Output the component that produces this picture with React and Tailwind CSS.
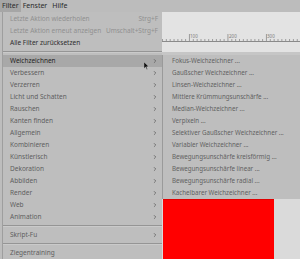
import { ChevronRight } from "lucide-react"

const mainItems = [
  { label: "Letzte Aktion wiederholen", shortcut: "Strg+F", disabled: true },
  { label: "Letzte Aktion erneut anzeigen", shortcut: "Umschalt+Strg+F", disabled: true },
  { label: "Alle Filter zurücksetzen", strong: true },
  { sep: true },
  { label: "Weichzeichnen", sub: true, active: true },
  { label: "Verbessern", sub: true },
  { label: "Verzerren", sub: true },
  { label: "Licht und Schatten", sub: true },
  { label: "Rauschen", sub: true },
  { label: "Kanten finden", sub: true },
  { label: "Allgemein", sub: true },
  { label: "Kombinieren", sub: true },
  { label: "Künstlerisch", sub: true },
  { label: "Dekoration", sub: true },
  { label: "Abbilden", sub: true },
  { label: "Render", sub: true },
  { label: "Web", sub: true },
  { label: "Animation", sub: true },
  { sep: true },
  { label: "Skript-Fu", sub: true },
  { sep: true },
  { label: "Ziegentraining" },
]

const blurItems = [
  "Fokus-Weichzeichner ...",
  "Gaußscher Weichzeichner ...",
  "Linsen-Weichzeichner ...",
  "Mittlere Krümmungsunschärfe ...",
  "Median-Weichzeichner ...",
  "Verpixeln ...",
  "Selektiver Gaußscher Weichzeichner ...",
  "Variabler Weichzeichner ...",
  "Bewegungsunschärfe kreisförmig ...",
  "Bewegungsunschärfe linear ...",
  "Bewegungsunschärfe radial ...",
  "Kachelbarer Weichzeichner ...",
]

const Ruler = () => {
  const ticks = []
  for (let i = 0; i < 36; i++) {
    const x = 0.5 + i * 3.85
    const major = i % 10 === 7
    ticks.push(<line key={i} x1={x} x2={x} y1={major ? 22 : 27} y2={29} stroke="#8a8a8a" strokeWidth="0.8" />)
  }
  return (
    <svg width="138" height="40" className="block">
      <line x1="0" x2="138" y1="29.5" y2="29.5" stroke="#8a8a8a" strokeWidth="1" />
      {ticks}
      {[
        [28, "100"],
        [67, "200"],
        [105, "300"],
      ].map(([x, t]) => (
        <text key={t} x={x} y="26" fontSize="4.5" fill="#7a7a7a" fontFamily="Noto Sans, sans-serif">
          {t}
        </text>
      ))}
    </svg>
  )
}

const Arrow = () => <ChevronRight size={6} strokeWidth={3} className="text-[#5a5a5a]" />

export default function App() {
  return (
    <div className="relative w-[300px] h-[259px] overflow-hidden bg-[#bdbdbd] text-[6.5px] font-['Noto_Sans',sans-serif]">
      {/* Menubar */}
      <div className="flex items-center h-[12px] bg-[#bcbcbc] text-[#2a2a2a] text-[7px]">
        <span className="h-full flex items-center px-[2px] bg-[#a6a6a6]">Filter</span>
        <span className="px-[2px]">Fenster</span>
        <span className="px-[3px]">Hilfe</span>
      </div>

      {/* Workspace */}
      <div className="flex h-[247px]">
        <div className="w-[162px] bg-[#bdbdbd]" />
        <div className="flex-1 flex flex-col">
          <div className="h-[43px] bg-[#e3e3e3] border-b-[3px] border-[#c6c6c6]">
            <Ruler />
          </div>
          <div className="flex-1 bg-[#dadada] pt-[144px] pl-[1px]">
            <div className="w-[111px] h-[80px] bg-[#ff0000] border-t border-[#e00000]" />
          </div>
        </div>
      </div>

      {/* Filter menu */}
      <div className="absolute left-[2px] top-[12px] w-[160px] h-[247px] pt-[1px] bg-[#bebebe] border-l border-[#9e9e9e]">
        {mainItems.map((it, i) =>
          it.sep ? (
            <div key={i} className="h-[6px] flex items-center">
              <div className="w-full border-t border-[#959595] border-b border-b-[#cacaca]" />
            </div>
          ) : (
            <div
              key={i}
              className={`h-[12px] flex items-center pl-[7px] pr-[4px] ${it.active ? "bg-[#a8a8a8] text-[#1e1e1e]" : it.disabled ? "text-[#909090]" : it.strong ? "text-[#2e2e2e]" : "text-[#5e5e5e]"}`}
            >
              <span className="flex-1 whitespace-nowrap">{it.label}</span>
              {it.shortcut && <span className="whitespace-nowrap">{it.shortcut}</span>}
              {it.sub && <Arrow />}
            </div>
          )
        )}
      </div>

      {/* Weichzeichnen submenu */}
      <div className="absolute left-[162px] top-[55px] w-[140px] bg-[#bebebe] border-l border-[#9a9a9a] text-[6.2px]">
        {blurItems.map((t) => (
          <div key={t} className="h-[12px] flex items-center pl-[9px] text-[#626262] whitespace-nowrap">
            {t}
          </div>
        ))}
      </div>

      {/* Mouse pointer */}
      <svg className="absolute left-[144px] top-[62px]" width="5" height="8" viewBox="0 0 5 8">
        <path d="M0 0 L0 6.5 L1.6 5 L2.8 7.6 L3.6 7.2 L2.5 4.7 L4.6 4.6 Z" fill="#111" stroke="#eee" strokeWidth="0.3" />
      </svg>
    </div>
  )
}
